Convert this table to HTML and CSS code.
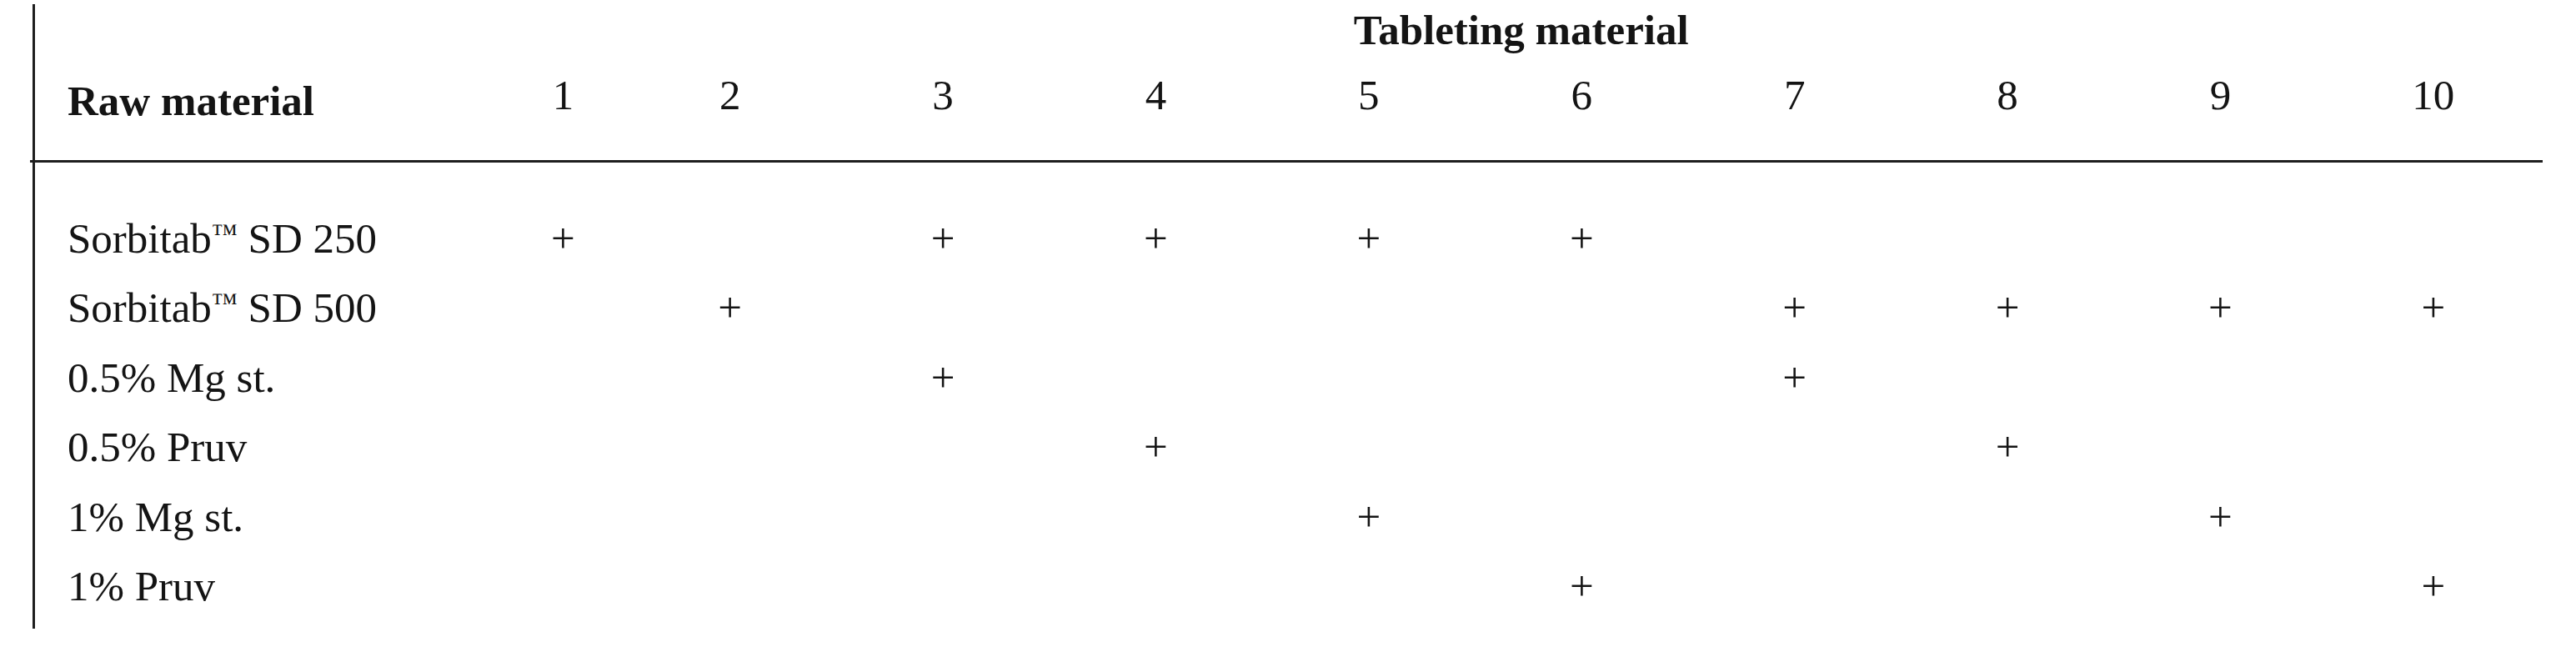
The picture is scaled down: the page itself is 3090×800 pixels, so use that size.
FILE: index.html
```html
<!DOCTYPE html>
<html lang="en">
<head>
<meta charset="utf-8">
<title>Tableting material</title>
<link rel="stylesheet" href="styles.css">
</head>
<body>
<div class="frame">
  <div class="head">
    <div class="grid title-row">
      <div class="label"></div>
      <div class="group-title">Tableting material</div>
    </div>
    <div class="grid num-row">
      <div class="label raw">Raw material</div>
      <div class="num">1</div>
      <div class="num">2</div>
      <div class="num">3</div>
      <div class="num">4</div>
      <div class="num">5</div>
      <div class="num">6</div>
      <div class="num">7</div>
      <div class="num">8</div>
      <div class="num">9</div>
      <div class="num">10</div>
    </div>
  </div>
  <div class="body">
    <div class="grid row">
      <div class="label">Sorbitab<span class="tm">™</span> SD 250</div>
      <div class="cell">+</div><div class="cell"></div><div class="cell">+</div><div class="cell">+</div><div class="cell">+</div>
      <div class="cell">+</div><div class="cell"></div><div class="cell"></div><div class="cell"></div><div class="cell"></div>
    </div>
    <div class="grid row">
      <div class="label">Sorbitab<span class="tm">™</span> SD 500</div>
      <div class="cell"></div><div class="cell">+</div><div class="cell"></div><div class="cell"></div><div class="cell"></div>
      <div class="cell"></div><div class="cell">+</div><div class="cell">+</div><div class="cell">+</div><div class="cell">+</div>
    </div>
    <div class="grid row">
      <div class="label">0.5% Mg st.</div>
      <div class="cell"></div><div class="cell"></div><div class="cell">+</div><div class="cell"></div><div class="cell"></div>
      <div class="cell"></div><div class="cell">+</div><div class="cell"></div><div class="cell"></div><div class="cell"></div>
    </div>
    <div class="grid row">
      <div class="label">0.5% Pruv</div>
      <div class="cell"></div><div class="cell"></div><div class="cell"></div><div class="cell">+</div><div class="cell"></div>
      <div class="cell"></div><div class="cell"></div><div class="cell">+</div><div class="cell"></div><div class="cell"></div>
    </div>
    <div class="grid row">
      <div class="label">1% Mg st.</div>
      <div class="cell"></div><div class="cell"></div><div class="cell"></div><div class="cell"></div><div class="cell">+</div>
      <div class="cell"></div><div class="cell"></div><div class="cell"></div><div class="cell">+</div><div class="cell"></div>
    </div>
    <div class="grid row">
      <div class="label">1% Pruv</div>
      <div class="cell"></div><div class="cell"></div><div class="cell"></div><div class="cell"></div><div class="cell"></div>
      <div class="cell">+</div><div class="cell"></div><div class="cell"></div><div class="cell"></div><div class="cell">+</div>
    </div>
  </div>
</div>
</body>
</html>
```

FILE: styles.css
```css
html, body {
  margin: 0;
  padding: 0;
  background: #ffffff;
}

body {
  font-family: "Liberation Serif", "Times New Roman", serif;
  font-size: 51px;
  color: #141414;
}

.frame {
  margin: 5px 0 0 39px;
  width: 3008px;
  border-left: 3px solid #1e1e1e;
}

.grid {
  display: grid;
  grid-template-columns: 561px 145px repeat(9, 255.4px);
  align-items: start;
}

.head {
  margin-left: -6px;
  padding-left: 6px;
  padding-bottom: 41px;
  border-bottom: 3px solid #1e1e1e;
}

.title-row {
  line-height: 60px;
  padding-top: 1px;
}

.group-title {
  grid-column: 2 / -1;
  text-align: center;
  font-weight: bold;
}

.num-row {
  line-height: 60px;
}

.label {
  padding-left: 39px;
  white-space: nowrap;
}

.raw {
  font-weight: bold;
  padding-top: 25px;
}

.num {
  text-align: center;
  padding-top: 18px;
}

.body {
  padding-top: 50px;
  padding-bottom: 9px;
}

.row {
  line-height: 83.4px;
  height: 83.4px;
}

.cell {
  text-align: center;
}

.tm {
  font-size: 0.62em;
  vertical-align: 0.4em;
  line-height: 0;
}
```
